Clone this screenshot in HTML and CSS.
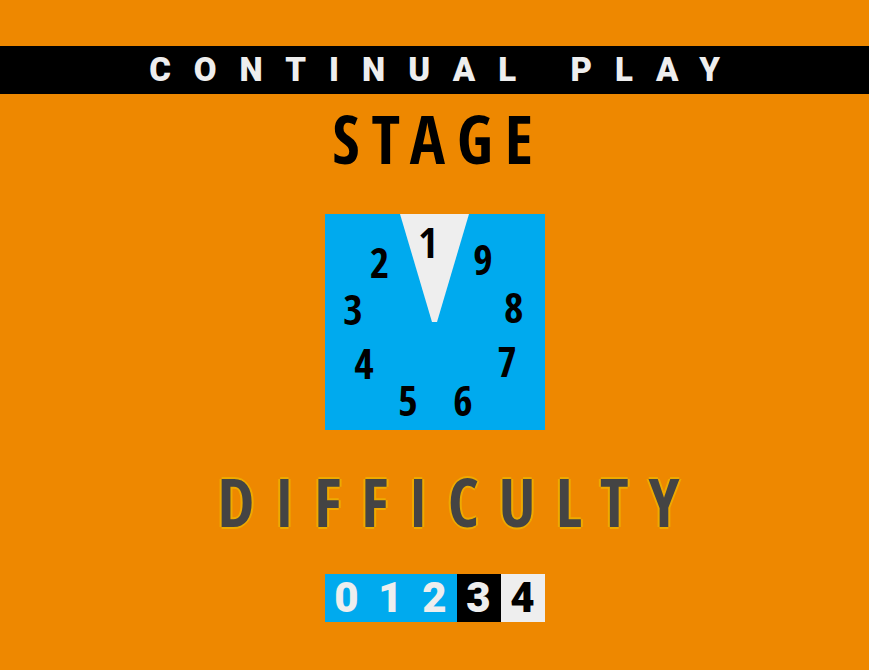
FILE: index.html
```html
<!DOCTYPE html>
<html lang="en">

<head>
    <meta charset="UTF-8">
    <meta name="viewport" content="width=device-width, initial-scale=1.0">
    <title>Continual Play</title>
    <link rel="stylesheet" href="styles.css">
</head>

<body>
<header class="banner">
    <h1>CONTINUAL PLAY</h1>
</header>
<form class="menu">
    <h2 class="heading" id="stage-heading">STAGE</h2>
    <div class="dial" role="radiogroup" aria-labelledby="stage-heading">
        <svg class="pointer" viewBox="0 0 220 216" aria-hidden="true">
            <polygon points="75,0 144,0 112,108 107,108" fill="#eee"/>
        </svg>
        <label class="stage s1"><input type="radio" name="stage" value="1" checked>1</label>
        <label class="stage s2"><input type="radio" name="stage" value="2">2</label>
        <label class="stage s3"><input type="radio" name="stage" value="3">3</label>
        <label class="stage s4"><input type="radio" name="stage" value="4">4</label>
        <label class="stage s5"><input type="radio" name="stage" value="5">5</label>
        <label class="stage s6"><input type="radio" name="stage" value="6">6</label>
        <label class="stage s7"><input type="radio" name="stage" value="7">7</label>
        <label class="stage s8"><input type="radio" name="stage" value="8">8</label>
        <label class="stage s9"><input type="radio" name="stage" value="9">9</label>
    </div>

    <h2 class="heading dim" id="difficulty-heading">DIFFICULTY</h2>
    <div class="levels" role="radiogroup" aria-labelledby="difficulty-heading">
        <label class="level"><input type="radio" name="difficulty" value="0">0</label>
        <label class="level"><input type="radio" name="difficulty" value="1">1</label>
        <label class="level"><input type="radio" name="difficulty" value="2">2</label>
        <label class="level dark"><input type="radio" name="difficulty" value="3">3</label>
        <label class="level light"><input type="radio" name="difficulty" value="4" checked>4</label>
    </div>
</form>
</body>

</html>
```
FILE: styles.css
```css
* {
    box-sizing: border-box;
}

body {
    margin: 0;
    padding-top: 46px;
    background-color: #ee8800;
    font-family: Roboto, "Liberation Sans", sans-serif;
}

h1,
h2 {
    margin: 0;
    text-align: center;
    white-space: nowrap;
}

.banner {
    background-color: #000;
    color: #eee;
}

.banner h1 {
    font-size: 33px;
    font-weight: 900;
    line-height: 48px;
    letter-spacing: 23px;
    text-indent: 23px;
}

.menu {
    display: flex;
    flex-direction: column;
    align-items: center;
}

.heading {
    padding: 8px 0 40px;
    font-family: "Open Sans Condensed", "Liberation Sans Narrow", "Liberation Sans", sans-serif;
    font-size: 66px;
    font-weight: 300;
    line-height: 72px;
    letter-spacing: 12px;
    text-indent: 8px;
    color: #000;
}

.dim {
    padding: 35px 0 37px;
    letter-spacing: 20px;
    text-indent: 48px;
    color: #444;
    text-shadow: 2px 0 #eeaa00, -2px 0 #eeaa00, 0 2px #eeaa00, 0 -2px #eeaa00;
}

.dial {
    position: relative;
    width: 220px;
    height: 216px;
    background-color: #00aaee;
}

.pointer {
    display: block;
    width: 100%;
    height: 100%;
}

/* numbers run anticlockwise round the dial */
.stage {
    position: absolute;
    transform: translate(-50%, -50%);
    color: #000;
    font-family: "Open Sans Condensed", "Liberation Sans Narrow", "Liberation Sans", sans-serif;
    font-size: 42px;
    font-weight: 700;
    line-height: 38px;
    cursor: pointer;
}

.s1 { left: 47%; top: 13%; }
.s2 { left: 25%; top: 22%; }
.s3 { left: 13%; top: 44%; }
.s4 { left: 18%; top: 69%; }
.s5 { left: 38%; top: 86%; }
.s6 { left: 63%; top: 86%; }
.s7 { left: 83%; top: 68%; }
.s8 { left: 86%; top: 43%; }
.s9 { left: 72%; top: 21%; }

.stage input,
.level input {
    position: absolute;
    opacity: 0;
    width: 0;
    height: 0;
    margin: 0;
}

.levels {
    display: grid;
    grid-template-columns: repeat(5, 44px);
}

.level {
    background-color: #00aaee;
    color: #eee;
    font-size: 42px;
    font-weight: 900;
    line-height: 48px;
    text-align: center;
    cursor: pointer;
}

.dark {
    background-color: #000;
}

.light {
    background-color: #eee;
    color: #000;
}
```
